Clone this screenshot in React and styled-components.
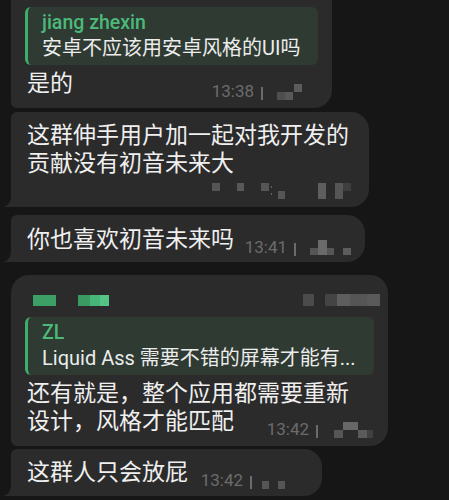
import React from "react";
import styled, { createGlobalStyle } from "styled-components";

const Global = createGlobalStyle`
  html, body { margin: 0; padding: 0; background: #161616; }
  body {
    width: 449px; height: 500px; overflow: hidden;
    font-family: Roboto, "Noto Sans CJK SC", sans-serif;
  }
`;

const Chat = styled.div`
  display: flex;
  flex-direction: column;
  align-items: flex-start;
  padding-left: 11px;
`;

const Bubble = styled.div`
  position: relative;
  box-sizing: border-box;
  width: ${(p) => p.$w}px;
  margin-top: ${(p) => p.$mt}px;
  padding: ${(p) => p.$pt}px 8px ${(p) => p.$pb}px 16px;
  background: #2b2b2b;
  border-radius: ${(p) => p.$r};
  color: #efefef;
  display: flex;
  flex-direction: column;
`;

const Tail = styled.svg`
  position: absolute;
  left: -8px;
  bottom: 0;
  width: 10px;
  height: 12px;
  display: block;
`;

const Header = styled.svg`
  display: block;
  width: 353px;
  height: 28px;
`;

const Reply = styled.div`
  display: flex;
  flex-direction: column;
  margin: ${(p) => p.$mt}px 6px 5px -2px;
  padding: 4px 10px 4px 14px;
  background: #2e3a32;
  border-left: 3px solid #3fae6c;
  border-radius: 6px;
`;

const ReplyName = styled.div`
  font-family: Roboto, sans-serif;
  font-weight: 500;
  font-size: 19.5px;
  line-height: 24px;
  color: #4cb97a;
`;

const ReplyText = styled.div`
  font-family: Roboto, "Noto Sans CJK SC", sans-serif;
  font-size: 20px;
  line-height: 26px;
  color: #ececec;
  white-space: nowrap;
`;

const Line = styled.div`
  font-family: Roboto, "Noto Sans CJK SC", sans-serif;
  font-size: 23px;
  line-height: 28px;
  white-space: nowrap;
`;

const LastRow = styled.div`
  display: flex;
  align-items: flex-end;
  justify-content: ${(p) => (p.$alone ? "flex-end" : "space-between")};
`;

const Meta = styled.div`
  display: flex;
  align-items: center;
  height: 20px;
  flex-shrink: 0;
  margin-top: ${(p) => (p.$alone ? 2 : 0)}px;
  margin-bottom: -3px;
`;

const Time = styled.span`
  font-family: Roboto, sans-serif;
  font-size: 17px;
  line-height: 20px;
  color: #6b6b6b;
`;

const Divider = styled.span`
  align-self: flex-end;
  width: 2px;
  height: 13px;
  margin: 0 6px 1px 7px;
  background: #6b6b6b;
`;

const Censor = styled.svg`
  display: block;
  height: 20px;
`;

const messages = [
  {
    id: 1,
    w: 321, mt: 0, pt: 7, pb: 10, r: "0 0 18px 6px",
    reply: { name: "jiang zhexin", text: "安卓不应该用安卓风格的UI吗" },
    lines: ["是的"],
    meta: {
      time: "13:38", w: 55,
      rects: [[8, 11, 8, 8, "#4e4e4e"], [16, 11, 8, 8, "#585858"], [25, 3, 8, 8, "#5c5c5c"]],
    },
  },
  {
    id: 2,
    w: 358, mt: 4, pt: 10, pb: 10, r: "6px 18px 18px 0", tail: true,
    lines: ["这群伸手用户加一起对我开发的", "贡献没有初音未来大"],
    metaAlone: true,
    meta: {
      w: 153,
      rects: [
        [4, 3, 8, 8, "#555"], [29, 3, 7, 8, "#585858"], [53, 3, 8, 8, "#555"],
        [63, 6, 1, 2, "#666"], [63, 13, 1, 2, "#666"], [70, 11, 7, 8, "#555"],
        [110, 3, 8, 16, "#5e5e5e"], [127, 3, 8, 16, "#555"], [135, 3, 8, 8, "#3e3e3e"],
      ],
    },
  },
  {
    id: 3,
    w: 354, mt: 8, pt: 11, pb: 8, r: "6px 18px 18px 0", tail: true,
    lines: ["你也喜欢初音未来吗"],
    meta: {
      time: "13:41", w: 55,
      rects: [[8, 11, 8, 7, "#555"], [16, 3, 9, 15, "#6a6a6a"], [25, 11, 7, 7, "#555"], [41, 11, 8, 7, "#5c5c5c"]],
    },
  },
  {
    id: 4,
    w: 377, mt: 13, pt: 10, pb: 10, r: "18px 18px 18px 6px",
    header: true,
    reply: { name: "ZL", text: "Liquid Ass 需要不错的屏幕才能有..." },
    replyMt: 4,
    lines: ["还有就是，整个应用都需要重新", "设计，风格才能匹配"],
    meta: {
      time: "13:42", w: 56,
      rects: [[10, 11, 9, 8, "#555"], [19, 3, 15, 8, "#676767"], [34, 11, 9, 8, "#5a5a5a"], [43, 11, 6, 8, "#404040"]],
    },
  },
  {
    id: 5,
    w: 311, mt: 3, pt: 10, pb: 9, r: "6px 18px 18px 0", tail: true,
    lines: ["这群人只会放屁"],
    meta: {
      time: "13:42", w: 56,
      rects: [[4, 11, 7, 8, "#555"], [20, 11, 7, 8, "#555"]],
    },
  },
];

function MetaBlock({ meta, alone }) {
  return (
    <Meta $alone={alone}>
      {meta.time && <Time>{meta.time}</Time>}
      {meta.time && <Divider />}
      <Censor width={meta.w} viewBox={`0 0 ${meta.w} 20`}>
        {meta.rects.map(([x, y, w, h, c], i) => (
          <rect key={i} x={x} y={y} width={w} height={h} fill={c} />
        ))}
      </Censor>
    </Meta>
  );
}

function SenderHeader() {
  return (
    <Header viewBox="0 0 353 28">
      <rect x="6" y="10" width="23" height="11" fill="#3b9f66" />
      <rect x="51" y="10" width="12" height="11" fill="#3a9a62" />
      <rect x="63" y="10" width="10" height="11" fill="#48b578" />
      <rect x="73" y="10" width="9" height="11" fill="#55c486" />
      <rect x="77" y="17" width="1" height="1" fill="#3fae6c" />
      <rect x="276" y="9" width="11" height="12" fill="#4b4b4b" />
      <rect x="298" y="9" width="12" height="12" fill="#444" />
      <rect x="310" y="9" width="13" height="12" fill="#5e5e5e" />
      <rect x="323" y="9" width="17" height="12" fill="#555" />
      <rect x="340" y="9" width="13" height="12" fill="#5a5a5a" />
    </Header>
  );
}

export default function App() {
  return (
    <>
      <Global />
      <Chat>
        {messages.map((m) => {
          const last = m.lines[m.lines.length - 1];
          const before = m.metaAlone ? m.lines : m.lines.slice(0, -1);
          return (
            <Bubble key={m.id} $w={m.w} $mt={m.mt} $pt={m.pt} $pb={m.pb} $r={m.r}>
              {m.header && <SenderHeader />}
              {m.reply && (
                <Reply $mt={m.replyMt || 0}>
                  <ReplyName>{m.reply.name}</ReplyName>
                  <ReplyText>{m.reply.text}</ReplyText>
                </Reply>
              )}
              {before.map((l, i) => (
                <Line key={i}>{l}</Line>
              ))}
              <LastRow $alone={m.metaAlone}>
                {!m.metaAlone && <Line>{last}</Line>}
                <MetaBlock meta={m.meta} alone={m.metaAlone} />
              </LastRow>
              {m.tail && (
                <Tail viewBox="0 0 10 12">
                  <path d="M8 0 C8 7 5 11 0 12 H10 V0 Z" fill="#2b2b2b" />
                </Tail>
              )}
            </Bubble>
          );
        })}
      </Chat>
    </>
  );
}
